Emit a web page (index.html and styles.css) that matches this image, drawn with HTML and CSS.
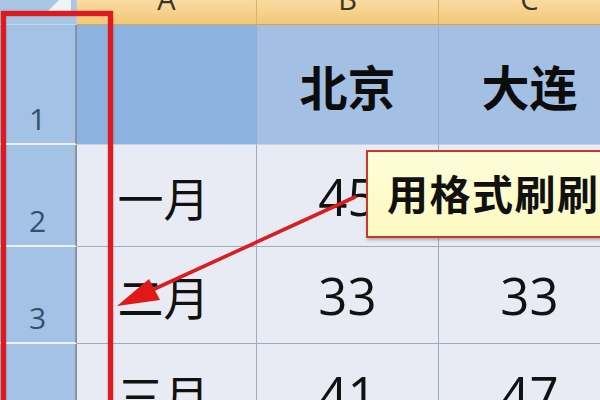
FILE: index.html
```html
<!DOCTYPE html>
<html lang="zh">
<head>
<meta charset="utf-8">
<link rel="stylesheet" href="styles.css">
</head>
<body>
<div class="sheet">
  <div class="grid">
    <div class="corner"><span class="tri"></span></div>
    <div class="ch"><span>A</span></div>
    <div class="ch"><span>B</span></div>
    <div class="ch"><span>C</span></div>

    <div class="rh"><span>1</span></div>
    <div class="cell sel active"></div>
    <div class="cell sel bold">北京</div>
    <div class="cell sel bold">大连</div>

    <div class="rh"><span>2</span></div>
    <div class="cell cjk">一月</div>
    <div class="cell num">45</div>
    <div class="cell num">33</div>

    <div class="rh"><span>3</span></div>
    <div class="cell cjk">二月</div>
    <div class="cell num">33</div>
    <div class="cell num">33</div>

    <div class="rh"><span>4</span></div>
    <div class="cell cjk">三月</div>
    <div class="cell num">41</div>
    <div class="cell num">47</div>
  </div>

  <div class="callout">用格式刷刷</div>

  <svg class="arrow" width="600" height="400" viewBox="0 0 600 400">
    <line x1="355" y1="197" x2="150" y2="291" stroke="#d81e1e" stroke-width="3.6" stroke-linecap="round"/>
    <polygon points="117,306 149,279 160,300" fill="#e01818"/>
  </svg>

  <div class="frame"></div>
</div>
</body>
</html>
```

FILE: styles.css
```css
html, body {
  margin: 0;
  padding: 0;
  width: 600px;
  height: 400px;
  overflow: hidden;
  background: #e9ebf4;
}

.sheet {
  position: relative;
  width: 600px;
  height: 400px;
  overflow: hidden;
}

.grid {
  display: grid;
  grid-template-columns: 77px 180px 182px 182px;
  grid-template-rows: 25px 120px 102px 97px 100px;
  width: 621px;
}

.grid > div {
  box-sizing: border-box;
  display: flex;
  justify-content: center;
}

.corner {
  position: relative;
  background: #aac6e6;
  border-right: 2px solid #b9c9d8;
  border-bottom: 1px solid #c9d6e2;
}

.corner .tri {
  position: absolute;
  right: 4px;
  top: -12px;
  width: 26px;
  height: 26px;
  background: #eef3f8;
  clip-path: polygon(100% 0, 100% 100%, 0 100%);
}

.ch {
  background: linear-gradient(#f9dba2, #f3c878);
  border-right: 1px solid #e0b060;
  border-bottom: 1px solid #d9a452;
  align-items: flex-start;
  font-family: "Open Sans", sans-serif;
  font-size: 29px;
  color: #3b3526;
}

.ch span {
  display: block;
  line-height: 29px;
  margin-top: -16px;
}

.rh {
  background: #a3c2e6;
  border-right: 2px solid #8a939d;
  border-bottom: 2px solid #e9f1fa;
  align-items: flex-end;
  padding-bottom: 9px;
  font-family: "Open Sans", sans-serif;
  font-size: 30px;
  color: #32506e;
}

.rh span {
  display: block;
  line-height: 30px;
}

.cell {
  align-items: center;
  background: #e9ebf4;
  border-right: 1px solid #9eacbe;
  border-bottom: 1px solid #9eacbe;
  color: #111;
  white-space: nowrap;
}

.cell.sel {
  background: #a3c0e4;
  border-bottom-color: #c8d3e2;
}

.cell.sel.active {
  background: #8db3e1;
}

.bold {
  font-family: "Noto Sans CJK SC", sans-serif;
  font-weight: 700;
  font-size: 48px;
  color: #0c0c0c;
}

.cjk {
  font-family: "Noto Sans CJK SC", sans-serif;
  font-weight: 400;
  font-size: 46px;
  padding-right: 6px;
}

.num {
  font-family: "Open Sans", sans-serif;
  font-size: 51px;
  font-weight: 400;
}

.callout {
  position: absolute;
  left: 366px;
  top: 150px;
  width: 280px;
  height: 88px;
  box-sizing: border-box;
  border: 2px solid #c23a2c;
  background: linear-gradient(#fefdd8, #fdf9c2);
  box-shadow: 1px 2px 3px rgba(90, 40, 30, 0.35);
  display: flex;
  align-items: center;
  padding-left: 19px;
  padding-bottom: 4px;
  font-family: "Noto Sans CJK SC", sans-serif;
  font-weight: 700;
  font-size: 41px;
  letter-spacing: 1.5px;
  color: #111;
  white-space: nowrap;
}

.arrow {
  position: absolute;
  left: 0;
  top: 0;
  pointer-events: none;
}

.frame {
  position: absolute;
  left: 1px;
  top: 11px;
  width: 112px;
  height: 430px;
  box-sizing: border-box;
  border: 5px solid #df1a1e;
  box-shadow: 0 0 2px rgba(140, 0, 0, 0.5), inset 0 0 2px rgba(140, 0, 0, 0.5);
}
```
